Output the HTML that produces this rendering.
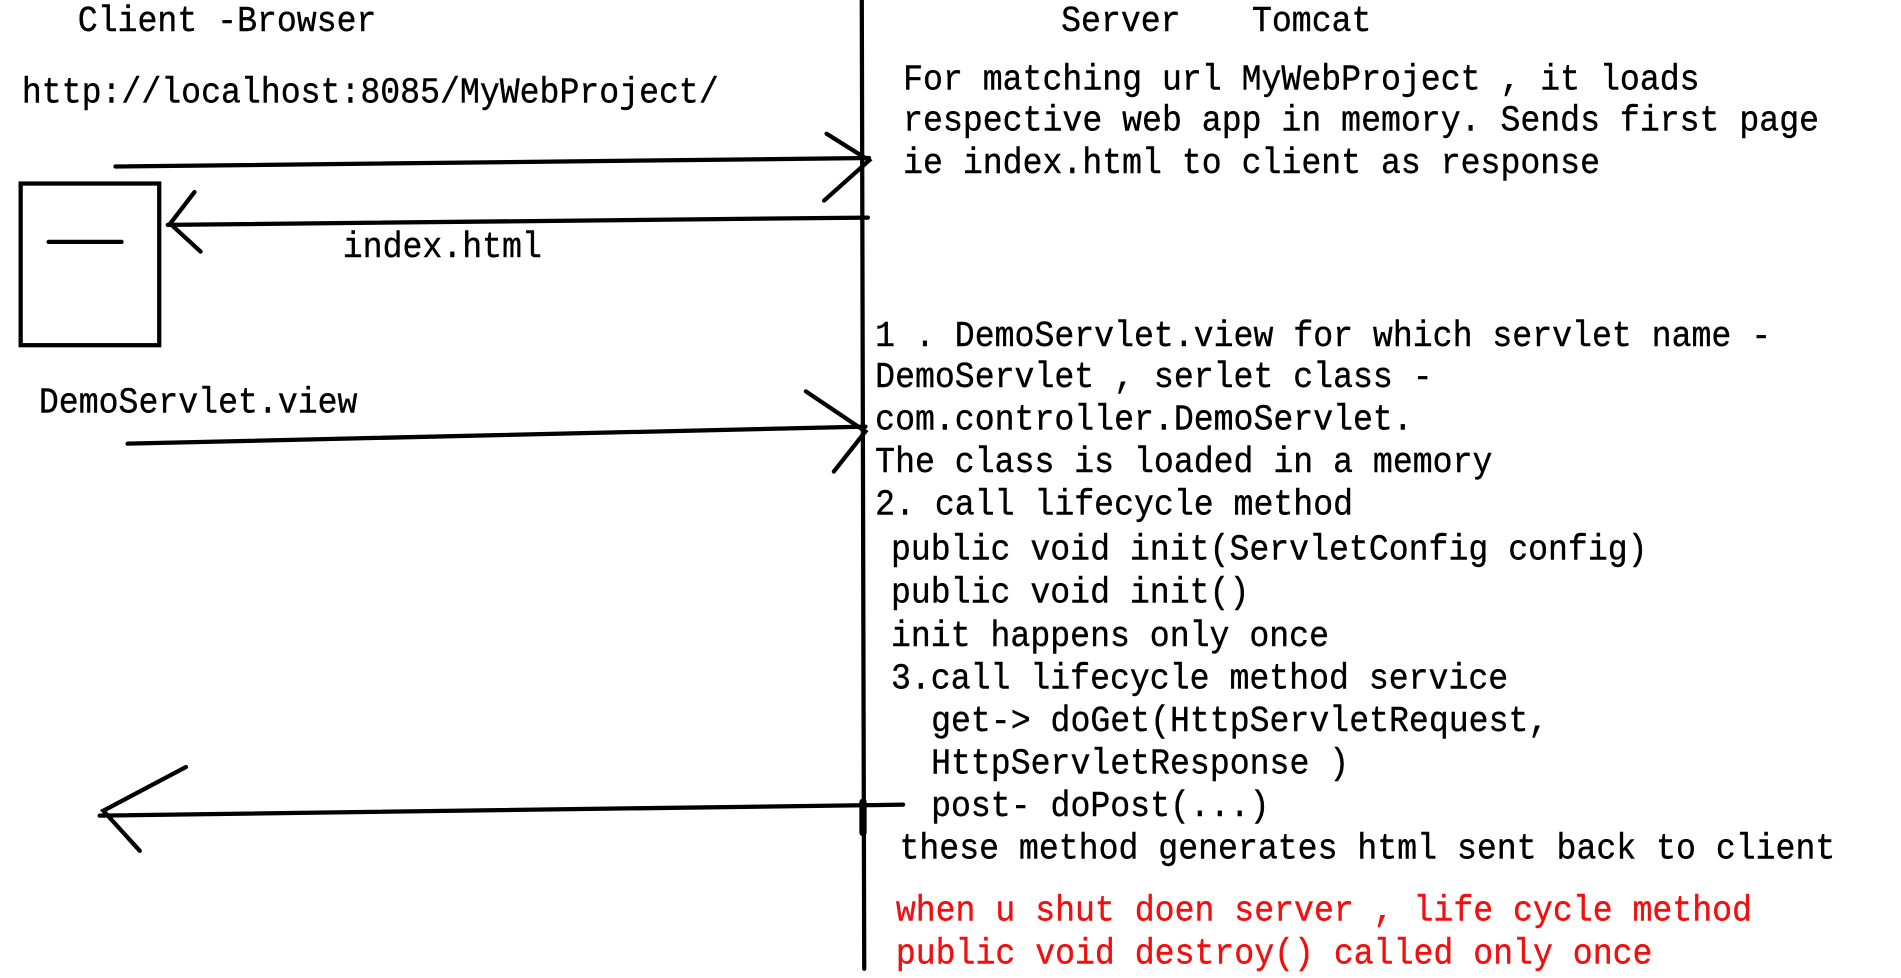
<!DOCTYPE html>
<html><head><meta charset="utf-8"><style>
html,body{margin:0;padding:0;background:#fff;width:1901px;height:977px;overflow:hidden}
#w{position:absolute;left:0;top:0;width:1564px;height:804px;transform:scale(1.2155);transform-origin:0 0}
.t{position:absolute;font-family:"Liberation Mono",monospace;font-size:27.3px;line-height:34px;height:34px;white-space:pre;color:#000;transform:scaleY(1.08);transform-origin:0 50%;-webkit-text-stroke:0.3px #000}
.r{color:#f01010;-webkit-text-stroke:0.3px #f01010}
svg{position:absolute;left:0;top:0}
</style></head><body><div id="w">
<svg width="1564" height="804" viewBox="0 0 1564 804" fill="none" stroke="#000" stroke-width="3.5" stroke-linecap="round">
<line x1="709" y1="0" x2="711" y2="797"/>
<line x1="95" y1="137" x2="715" y2="130"/>
<polyline points="680,110 715,132 678,165"/>
<rect x="17" y="151" width="114" height="133" stroke-width="3.5"/>
<line x1="40" y1="199" x2="100" y2="199"/>
<line x1="138" y1="185" x2="714" y2="179"/>
<polyline points="160,158 140,184 165,207"/>
<line x1="105" y1="365" x2="712" y2="351"/>
<polyline points="663,322 712,355 686,388"/>
<line x1="82" y1="671" x2="743" y2="662"/>
<polyline points="153,631 85,667 115,700"/>
<line x1="710" y1="660" x2="710" y2="685" stroke-width="6"/>
</svg>
<div class="t" style="left:64px;top:2px">Client -Browser</div>
<div class="t" style="left:873px;top:2px">Server</div>
<div class="t" style="left:1030px;top:2px">Tomcat</div>
<div class="t" style="left:18px;top:61px">http://localhost:8085/MyWebProject/</div>
<div class="t" style="left:743px;top:50px">For matching url MyWebProject , it loads</div>
<div class="t" style="left:743px;top:84px">respective web app in memory. Sends first page</div>
<div class="t" style="left:743px;top:119px">ie index.html to client as response</div>
<div class="t" style="left:282px;top:188px">index.html</div>
<div class="t" style="left:32px;top:316px">DemoServlet.view</div>
<div class="t" style="left:720px;top:261px">1 . DemoServlet.view for which servlet name -</div>
<div class="t" style="left:720px;top:295px">DemoServlet , serlet class -</div>
<div class="t" style="left:720px;top:330px">com.controller.DemoServlet.</div>
<div class="t" style="left:720px;top:365px">The class is loaded in a memory</div>
<div class="t" style="left:720px;top:400px">2. call lifecycle method</div>
<div class="t" style="left:733px;top:437px">public void init(ServletConfig config)</div>
<div class="t" style="left:733px;top:472px">public void init()</div>
<div class="t" style="left:733px;top:508px">init happens only once</div>
<div class="t" style="left:733px;top:543px">3.call lifecycle method service</div>
<div class="t" style="left:766px;top:578px">get-&gt; doGet(HttpServletRequest,</div>
<div class="t" style="left:766px;top:613px">HttpServletResponse )</div>
<div class="t" style="left:766px;top:648px">post- doPost(...)</div>
<div class="t" style="left:740px;top:683px">these method generates html sent back to client</div>
<div class="t r" style="left:737px;top:734px">when u shut doen server , life cycle method</div>
<div class="t r" style="left:737px;top:769px">public void destroy() called only once</div>
</div></body></html>
